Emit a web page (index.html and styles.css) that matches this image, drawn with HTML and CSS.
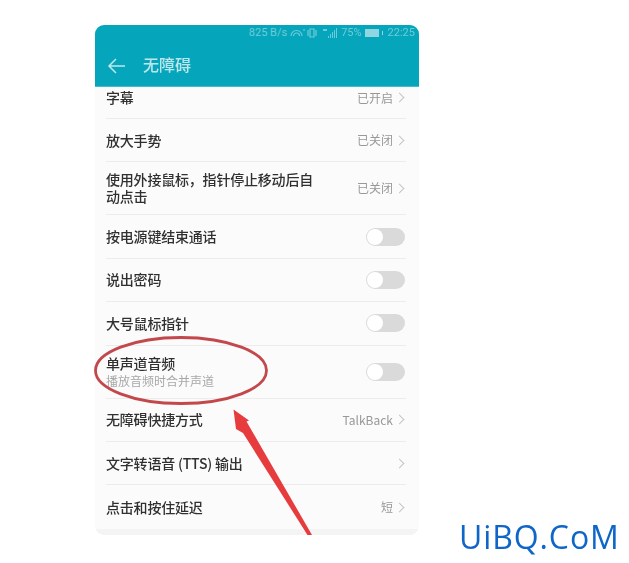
FILE: index.html
```html
<!DOCTYPE html>
<html lang="zh">
<head>
<meta charset="utf-8">
<title>无障碍</title>
<link rel="stylesheet" href="styles.css">
</head>
<body>
<div class="shot">
  <main class="phone">
    <div class="status">
      <span>825 B/s</span>
      <svg class="st-icon" width="30" height="10" viewBox="0 0 30 10"><path d="M1 8a5.500 5.500 0 0 1 11 0M3.500 8a3 3 0 0 1 6 0" fill="none" stroke="#6fcbd8" stroke-width="1.200"/><path d="M14 1v2M20 1h4v8h-4zM18 2v6M26 2v6" fill="none" stroke="#6fcbd8" stroke-width="1.200"/></svg>
      <svg class="st-icon" width="15" height="10" viewBox="0 0 15 10"><path d="M0 1h4v2H0zM5 8h1v2H5zM7 6h1v4H7zM9 4h1v6H9zM11 2h1v8h-1zM13 0h1v10h-1z" fill="#6fcbd8"/></svg>
      <span>75%</span>
      <svg class="st-icon" width="20" height="8" viewBox="0 0 20 8"><path d="M0 0h14v8H0z" fill="#8fd6e0"/><path d="M17 2h1v4h-1z" fill="#8fd6e0"/></svg>
      <span>22:25</span>
    </div>
    <header class="appbar">
      <svg class="back" width="20" height="18" viewBox="0 0 20 18"><path d="M19 9H3M10 2 3 9l7 7" fill="none" stroke="#bfe8ee" stroke-width="1.500"/></svg>
      <h1>无障碍</h1>
    </header>
    <div class="list">
      <div class="row first"><span class="label">字幕</span><span class="val">已开启</span><i class="chev"></i></div>
      <div class="row"><span class="label">放大手势</span><span class="val">已关闭</span><i class="chev"></i></div>
      <div class="row tall"><span class="label wrap">使用外接鼠标，指针停止移动后自动点击</span><span class="val">已关闭</span><i class="chev"></i></div>
      <div class="row"><span class="label">按电源键结束通话</span><b class="toggle"></b></div>
      <div class="row"><span class="label">说出密码</span><b class="toggle"></b></div>
      <div class="row"><span class="label">大号鼠标指针</span><b class="toggle"></b></div>
      <div class="row tall"><span class="stack"><span class="label">单声道音频</span><span class="sub">播放音频时合并声道</span></span><b class="toggle"></b></div>
      <div class="row"><span class="label">无障碍快捷方式</span><span class="val">TalkBack</span><i class="chev"></i></div>
      <div class="row"><span class="label">文字转语音 (TTS) 输出</span><i class="chev"></i></div>
      <div class="row last"><span class="label">点击和按住延迟</span><span class="val">短</span><i class="chev"></i></div>
    </div>
    <div class="foot"></div>
  </main>
  <svg class="ink" width="629" height="563" viewBox="0 0 629 563">
    <ellipse cx="181" cy="370.500" rx="85.500" ry="33" fill="none" stroke="#c2484c" stroke-width="2.800"/>
    <path d="M233.500 409.500 249 420.500 246.500 421.500 312 535 307.500 535 243 433 236 429Z" fill="#e63c3e"/>
  </svg>
  <div class="mark">UiBQ.CoM</div>
</div>
</body>
</html>
```
FILE: styles.css
```css
* { box-sizing: border-box; }
html, body { margin: 0; padding: 0; background: #fff; }
body { font-family: "Liberation Sans", "Noto Sans CJK SC", sans-serif; }
.shot { position: relative; width: 629px; height: 563px; padding: 25px 0 0 95px; overflow: hidden; }
.phone { width: 324px; height: 510px; background: #fbfbfb; border-radius: 9px; overflow: hidden; filter: blur(.5px); display: flex; flex-direction: column; }
.status { height: 15px; flex: none; background: #05a6bb; color: #6fcbd8; font: 11px/14px Roboto, sans-serif; display: flex; justify-content: flex-end; align-items: center; gap: 3px; padding: 0 4px 0 0; }
.appbar { height: 47px; flex: none; background: #05a6bb; display: flex; align-items: center; gap: 17px; padding: 5px 0 0 11px; border-bottom: 1px solid #40bccb; }
.appbar h1 { margin: 0 0 4px; font: 500 16px/20px "Noto Sans CJK SC", sans-serif; color: #bde6ec; }
.list { display: flex; flex-direction: column; flex: none; }
.row { height: 43.400px; margin: 0 13px 0 11px; display: flex; align-items: center; border-bottom: 1px solid #ececec; }
.row.first { height: 32px; padding-bottom: 10px; }
.row.tall { height: 53px; }
.row.last { border-bottom: 0; }
.foot { flex: 1; background: #f4f4f4; }
.label { font: 500 14px/17px "Noto Sans CJK SC", sans-serif; letter-spacing: -.2px; color: #303030; margin-right: auto; }
.label.wrap { width: 212px; }
.stack { display: flex; flex-direction: column; margin-right: auto; }
.sub { font: 400 12px/16px "Noto Sans CJK SC", sans-serif; color: #a8a8a8; margin-top: 1px; }
.val { font: 400 12px/16px "Noto Sans CJK SC", sans-serif; color: #989898; }
.chev { width: 7px; height: 7px; margin: 0 3px 0 3px; border-top: 1px solid #c4c4c4; border-right: 1px solid #c4c4c4; transform: rotate(45deg); flex: none; }
.toggle { width: 39px; height: 18px; border-radius: 9px; background: #dadada; position: relative; flex: none; margin-right: 1px; }
.toggle::after { content: ""; position: absolute; left: 1px; top: 1px; width: 16px; height: 16px; border-radius: 50%; background: #fff; }
.ink { position: absolute; left: 0; top: 0; }
.mark { position: absolute; left: 459px; top: 518px; font: 400 32px/38px "Open Sans", sans-serif; color: #0f66c9; letter-spacing: .9px; }
```
